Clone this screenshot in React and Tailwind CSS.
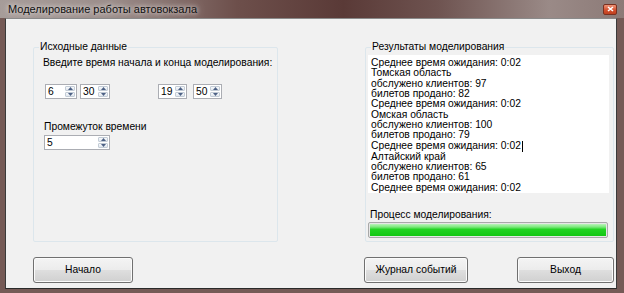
import React from "react";

function Arrow({ up }) {
  return (
    <svg width="5" height="3" viewBox="0 0 5 3" className="block">
      {up ? <polygon points="0,3 5,3 2.5,0" fill="#4d6185" /> : <polygon points="0,0 5,0 2.5,3" fill="#4d6185" />}
    </svg>
  );
}

function Spin({ w, value }) {
  return (
    <div className={`flex h-[15px] border border-[#abadb3] bg-white ${w}`}>
      <div className="flex-1 pl-[2px] text-[10.3px] leading-[13px] text-black">{value}</div>
      <div className="flex w-[12px] flex-col gap-px p-px">
        <div className="flex flex-1 items-center justify-center rounded-[1px] border border-[#c3ccd6] bg-[linear-gradient(to_bottom,#f7f9fb,#e1e7ee)]">
          <Arrow up />
        </div>
        <div className="flex flex-1 items-center justify-center rounded-[1px] border border-[#c3ccd6] bg-[linear-gradient(to_bottom,#f7f9fb,#e1e7ee)]">
          <Arrow />
        </div>
      </div>
    </div>
  );
}

function Btn({ w, ml, children }) {
  return (
    <div
      className={`flex h-[26px] items-center justify-center rounded-[3px] border border-[#707070] bg-[linear-gradient(to_bottom,#f4f4f4_0%,#ececec_48%,#dedede_52%,#d0d0d0_100%)] text-[10.3px] text-black shadow-[inset_0_0_0_1px_#fbfbfb] ${w} ${ml}`}
    >
      {children}
    </div>
  );
}

const lines = [
  "Среднее время ожидания: 0:02",
  "Томская область",
  "обслужено клиентов: 97",
  "билетов продано: 82",
  "Среднее время ожидания: 0:02",
  "Омская область",
  "обслужено клиентов: 100",
  "билетов продано: 79",
  "CURSOR",
  "Алтайский край",
  "обслужено клиентов: 65",
  "билетов продано: 61",
  "Среднее время ожидания: 0:02",
];

export default function App() {
  return (
    <div className="flex h-[293px] w-[624px] flex-col bg-[#755a56] font-['Liberation_Sans',Arial,sans-serif]">
      {/* title bar */}
      <div className="flex h-[18px] items-center justify-between bg-[linear-gradient(to_right,#a69c99_0%,#9a8c89_18%,#6d4f4b_38%,#5a3a37_55%,#6e5350_70%,#9a8a87_88%,#8c7a77_100%)] pl-[8px] pr-[7px]">
        <span className="text-[11px] leading-[14px] text-[#111] [text-shadow:0_0_4px_#e8e4e3,0_0_8px_#d8d2d0]">
          Моделирование работы автовокзала
        </span>
        <div className="flex h-[11px] w-[14px] items-center justify-center rounded-[2px] border border-[#7a3020] bg-[linear-gradient(to_bottom,#ee9478,#d4502f_55%,#c0401f)]">
          <svg width="7" height="6" viewBox="0 0 7 6">
            <path d="M1 1 L6 5 M6 1 L1 5" stroke="#fff" strokeWidth="1.6" />
          </svg>
        </div>
      </div>

      {/* body */}
      <div className="flex flex-1 pb-[4px] pl-[5px] pr-[7px]">
        <div className="flex flex-1 flex-col border border-t-[#8a8a8a] border-l-[#3a3a3a] border-r-[#3a3a3a] border-b-[#2a2a2a] bg-[#f1f1f1]">
          <div className="ml-[27px] mt-[22px] flex">
            {/* left group */}
            <fieldset className="h-[201px] w-[245px] rounded-[2px] border border-[#dce6ec]">
              <legend className="ml-[5px] px-px text-[10.3px] leading-[12px] text-black">Исходные данные</legend>
              <div className="ml-[9px] mt-[4px] text-[10.3px] leading-[12px] text-black">
                Введите время начала и конца моделирования:
              </div>
              <div className="ml-[11px] mt-[15px] flex">
                <Spin w="w-[32px]" value="6" />
                <div className="ml-[3px]">
                  <Spin w="w-[30px]" value="30" />
                </div>
                <div className="ml-[48px]">
                  <Spin w="w-[29px]" value="19" />
                </div>
                <div className="ml-[6px]">
                  <Spin w="w-[29px]" value="50" />
                </div>
              </div>
              <div className="ml-[10px] mt-[22px] text-[10.3px] leading-[12px] text-black">Промежуток времени</div>
              <div className="ml-[10px] mt-[2px]">
                <Spin w="w-[66px]" value="5" />
              </div>
            </fieldset>

            {/* right group */}
            <fieldset className="ml-[87px] h-[201px] w-[249px] rounded-[2px] border border-[#dce6ec]">
              <legend className="ml-[5px] px-px text-[10.3px] leading-[12px] text-black">Результаты моделирования</legend>
              <div className="ml-[2px] mt-[2px] h-[138px] w-[241px] bg-white pl-[3px] pt-[3px] text-[10.3px] leading-[10.33px] text-black">
                {lines.map((l, i) =>
                  l === "CURSOR" ? (
                    <div key={i} className="flex items-center whitespace-nowrap">
                      Среднее время ожидания: 0:02
                      <span className="ml-px inline-block h-[11px] w-px bg-black" />
                    </div>
                  ) : (
                    <div key={i} className="whitespace-nowrap">
                      {l}
                    </div>
                  )
                )}
              </div>
              <div className="ml-[4px] mt-[16px] text-[10.3px] leading-[12px] text-black">Процесс моделирования:</div>
              <div className="ml-[2px] mt-px h-[16px] w-[240px] rounded-[2px] border border-[#a8a8a8] bg-[#e6e6e6] p-px">
                <div className="h-full w-full bg-[linear-gradient(to_bottom,#b9f4b9_0%,#7ce87c_25%,#22d322_45%,#13c713_100%)]" />
              </div>
            </fieldset>
          </div>

          {/* buttons */}
          <div className="ml-[27px] mt-[15px] flex">
            <Btn w="w-[100px]" ml="ml-0">Начало</Btn>
            <Btn w="w-[104px]" ml="ml-[231px]">Журнал событий</Btn>
            <Btn w="w-[97px]" ml="ml-[49px]">Выход</Btn>
          </div>
        </div>
      </div>
    </div>
  );
}
